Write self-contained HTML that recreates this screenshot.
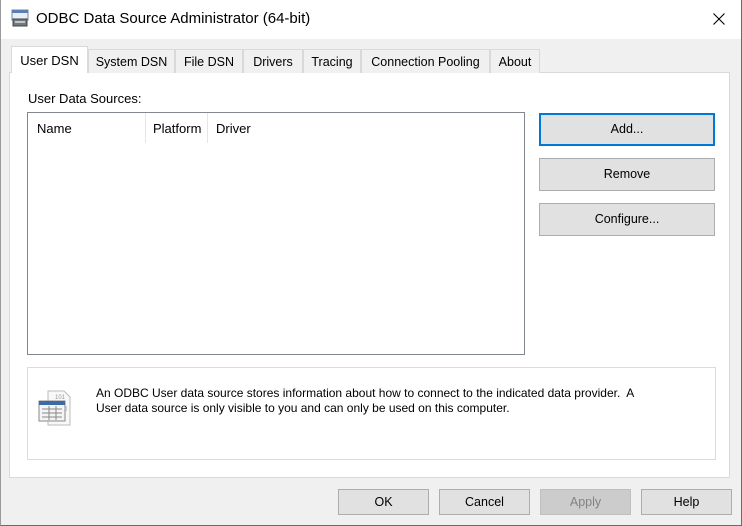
<!DOCTYPE html><html><head><style>
*{box-sizing:border-box;margin:0;padding:0}
body{width:742px;height:526px;background:#f0f0f0;font-family:"Liberation Sans",sans-serif;font-size:12.5px;color:#000;position:relative;overflow:hidden}
.a{position:absolute}
.title{left:0;top:0;width:742px;height:39px;background:#fff}
.tab{position:absolute;top:49px;height:24px;background:#f0f0f0;border:1px solid #d9d9d9;border-bottom:none;text-align:center;line-height:24px;font-size:12.5px}
.btn{position:absolute;background:#e1e1e1;border:1px solid #adadad;text-align:center;font-size:12.5px}
</style></head><body>
<div class="a title"></div>
<div class="a" style="left:0;top:0;width:742px;height:526px;border-left:1px solid #9a9a9a;border-right:1px solid #6b6b6b;border-bottom:1px solid #6b6b6b;z-index:5"></div>
<svg class="a" style="left:11px;top:9px" width="18" height="18" viewBox="0 0 18 18"><rect x="1" y="1" width="16" height="10" fill="#e8eef5" stroke="#7a8aa0"/><rect x="1" y="1" width="16" height="3" fill="#5b7fb0"/><rect x="2" y="10" width="14" height="7" fill="#707880" stroke="#444"/><rect x="4" y="12" width="10" height="2" fill="#c0c6cc"/></svg>
<div class="a" style="left:36px;top:10px;font-size:15px">ODBC Data Source Administrator (64-bit)</div>
<svg class="a" style="left:713px;top:13px" width="12" height="12" viewBox="0 0 12 12"><path d="M0.5 0.5L11.5 11.5M11.5 0.5L0.5 11.5" stroke="#000" stroke-width="1.1"/></svg>
<div class="a" style="left:9px;top:72px;width:721px;height:406px;background:#fff;border:1px solid #d9d9d9"></div>
<div class="tab" style="left:11px;top:46px;width:77px;height:27px;background:#fff;line-height:27px;z-index:2;font-size:13px">User DSN</div>
<div class="tab" style="left:88px;width:87px">System DSN</div>
<div class="tab" style="left:175px;width:68px">File DSN</div>
<div class="tab" style="left:243px;width:60px">Drivers</div>
<div class="tab" style="left:303px;width:58px">Tracing</div>
<div class="tab" style="left:361px;width:129px">Connection Pooling</div>
<div class="tab" style="left:490px;width:50px">About</div>
<div class="a" style="left:28px;top:91px;font-size:13px">User Data Sources:</div>
<div class="a" style="left:27px;top:112px;width:498px;height:243px;border:1px solid #828790;background:#fff"></div>
<div class="a" style="left:145px;top:113px;width:1px;height:30px;background:#e5e5e5"></div>
<div class="a" style="left:207px;top:113px;width:1px;height:30px;background:#e5e5e5"></div>
<div class="a" style="left:37px;top:121px;font-size:13px">Name</div>
<div class="a" style="left:153px;top:121px;font-size:13px">Platform</div>
<div class="a" style="left:216px;top:121px;font-size:13px">Driver</div>
<div class="btn" style="left:539px;top:113px;width:176px;height:33px;border:2px solid #0078d7;line-height:29px">Add...</div>
<div class="btn" style="left:539px;top:158px;width:176px;height:33px;line-height:31px">Remove</div>
<div class="btn" style="left:539px;top:203px;width:176px;height:33px;line-height:31px">Configure...</div>
<div class="a" style="left:27px;top:367px;width:689px;height:93px;border:1px solid #dcdcdc;background:#fff"></div>
<svg class="a" style="left:38px;top:389px" width="42" height="42" viewBox="0 0 42 42"><path d="M10 2h16l6 6v28H10z" fill="#f8f8f8" stroke="#bbb"/><text x="17" y="10" font-size="6" fill="#999">101</text><text x="26" y="22" font-size="6" fill="#999">0</text><rect x="1" y="12" width="26" height="20" fill="#f4f4f4" stroke="#8a8a8a"/><rect x="1" y="12" width="26" height="4" fill="#3a6aa8"/><g stroke="#888"><path d="M4 20h20M4 24h20M4 28h20M11 17v14M18 17v14"/></g></svg>
<div class="a" style="left:96px;top:386px;font-size:12px;line-height:15px;width:612px">An ODBC User data source stores information about how to connect to the indicated data provider.&nbsp; A<br>User data source is only visible to you and can only be used on this computer.</div>
<div class="btn" style="left:338px;top:489px;width:91px;height:26px;line-height:24px">OK</div>
<div class="btn" style="left:439px;top:489px;width:91px;height:26px;line-height:24px">Cancel</div>
<div class="btn" style="left:540px;top:489px;width:91px;height:26px;line-height:24px;background:#cccccc;border-color:#bfbfbf;color:#838383">Apply</div>
<div class="btn" style="left:641px;top:489px;width:91px;height:26px;line-height:24px">Help</div>
</body></html>
